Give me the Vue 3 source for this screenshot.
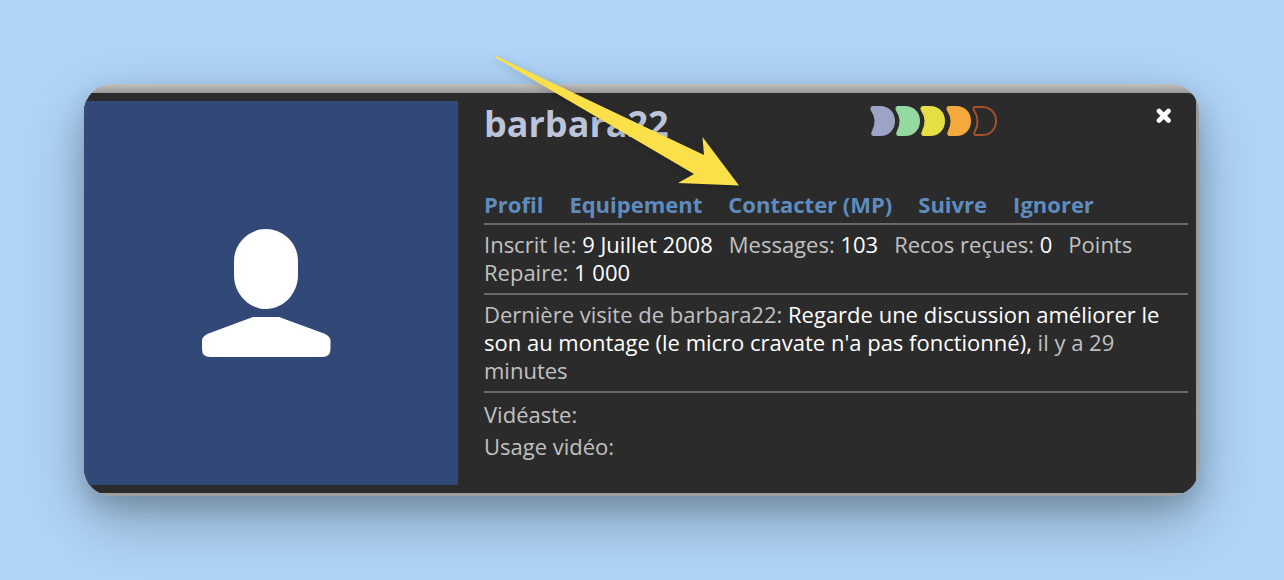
<script setup>
const links = ['Profil', 'Equipement', 'Contacter (MP)', 'Suivre', 'Ignorer']
const moons = [
  { x: 0, fill: '#9ba4c4', stroke: '#9ba4c4' },
  { x: 25, fill: '#93d9a0', stroke: '#93d9a0' },
  { x: 50, fill: '#e3df45', stroke: '#e3df45' },
  { x: 76, fill: '#f5a93c', stroke: '#f5a93c' },
  { x: 102, fill: 'none', stroke: '#a5512b' },
]
</script>

<template>
  <main class="page">
    <div class="stage">
      <article class="frame">
        <div class="card">
          <div class="avatar">
            <svg width="130" height="130" viewBox="0 0 130 130" role="img" aria-label="Avatar">
              <path fill="#fff" d="M65 1C82 1 97 15 97 33V47C97 66 82 81 65 81S33 66 33 47V33C33 15 48 1 65 1Z" />
              <path fill="#fff" d="M52 89H78L123 105.500Q129.500 108 129.500 113V121Q129.500 129 121 129H9Q1 129 1 121V113Q1 108 7.500 105.500Z" />
            </svg>
          </div>
          <section class="info">
            <header class="head">
              <h1 class="name">barbara22</h1>
              <svg class="moons" width="130" height="32" viewBox="0 0 130 32" aria-hidden="true">
                <path
                  v-for="m in moons"
                  :key="m.x"
                  :transform="`translate(${m.x} 0)`"
                  :fill="m.fill"
                  :stroke="m.stroke"
                  stroke-width="2"
                  stroke-linejoin="round"
                  d="M3 2H10C19 2 24 8.500 24 16S19 30 10 30H3.500Q1.500 29.500 2.500 27.500C6.500 20 6.500 12 1.800 5Q0.500 2.500 3 2Z"
                />
              </svg>
              <button class="close" type="button" aria-label="Fermer">
                <svg width="16" height="16" viewBox="0 0 16 16">
                  <path d="M3 3L12.500 12.500M12.500 3L3 12.500" stroke="#fff" stroke-width="4.600" stroke-linecap="round" />
                </svg>
              </button>
            </header>
            <nav class="links">
              <a v-for="l in links" :key="l" href="#">{{ l }}</a>
            </nav>
            <p class="block stats">
              <span>Inscrit le: <b>9 Juillet 2008</b></span>
              <span>Messages: <b>103</b></span>
              <span>Recos reçues: <b>0</b></span>
              <span>Points Repaire: <b>1 000</b></span>
            </p>
            <p class="block">
              Dernière visite de barbara22: <b>Regarde une discussion améliorer le son au montage (le micro cravate n'a pas fonctionné),</b> il y a 29 minutes
            </p>
            <div class="extra">
              <p>Vidéaste:</p>
              <p>Usage vidéo:</p>
            </div>
          </section>
        </div>
      </article>
      <svg class="arrow" width="260" height="140" viewBox="0 0 260 140" aria-hidden="true">
        <path fill="#fbe04a" d="M12 6L220 105L218.500 87L255 135.500L194 133L210 124L12 8Q11 6 12 6Z" />
      </svg>
    </div>
  </main>
</template>

<style>
body {
  margin: 0;
  background: #b0d5f8;
}
</style>

<style scoped>
.page {
  box-sizing: border-box;
  min-height: 100vh;
  padding: 84px 85px 84px 84px;
  overflow: hidden;
  font: 22px/28px 'Open Sans', 'Noto Sans', sans-serif;
  color: #c1c1c1;
}
.stage {
  position: relative;
}
.frame {
  padding: 9px 3px 3px 0;
  border-radius: 28px;
  overflow: hidden;
  background: linear-gradient(#c2c0bf 0, #999 9px, #a09d9c 100%);
  box-shadow: 0 24px 64px rgba(0, 0, 0, 0.25), 0 12px 26px rgba(0, 0, 0, 0.18);
}
.card {
  display: grid;
  grid-template-columns: 374px 1fr;
  column-gap: 26px;
  padding: 8px 8px 8px 0;
  border-radius: 0 8px 0 0;
  background: #2b2b2b;
}
.avatar {
  display: flex;
  align-items: center;
  justify-content: center;
  box-sizing: border-box;
  min-height: 384px;
  padding: 0 20px 0 10px;
  background: #324876;
}
.head {
  display: flex;
  align-items: flex-start;
  height: 89px;
}
.name {
  flex: 0 0 386px;
  margin: 0;
  font-size: 36px;
  line-height: 46px;
  font-weight: 700;
  color: #bcc4dc;
}
.moons {
  margin-top: 4px;
}
.close {
  margin: 7px 16px 0 auto;
  padding: 0;
  border: 0;
  background: none;
  cursor: pointer;
}
.close svg {
  display: block;
}
.links {
  display: flex;
  gap: 26px;
  padding-bottom: 5px;
  border-bottom: 2px solid #696969;
}
.links a {
  color: #5f8cbf;
  font-weight: 700;
  text-decoration: none;
}
.block {
  margin: 0;
  padding: 5px 0 7px;
  border-bottom: 2px solid #696969;
}
.stats span {
  margin-right: 16px;
}
b {
  font-weight: 500;
  color: #fff;
}
.extra {
  display: grid;
  gap: 4px;
  padding-top: 7px;
}
.extra p {
  margin: 0;
}
.arrow {
  position: absolute;
  left: 400px;
  top: -34px;
  pointer-events: none;
  filter: drop-shadow(0 2px 4px rgba(0, 0, 0, 0.2));
}
</style>
